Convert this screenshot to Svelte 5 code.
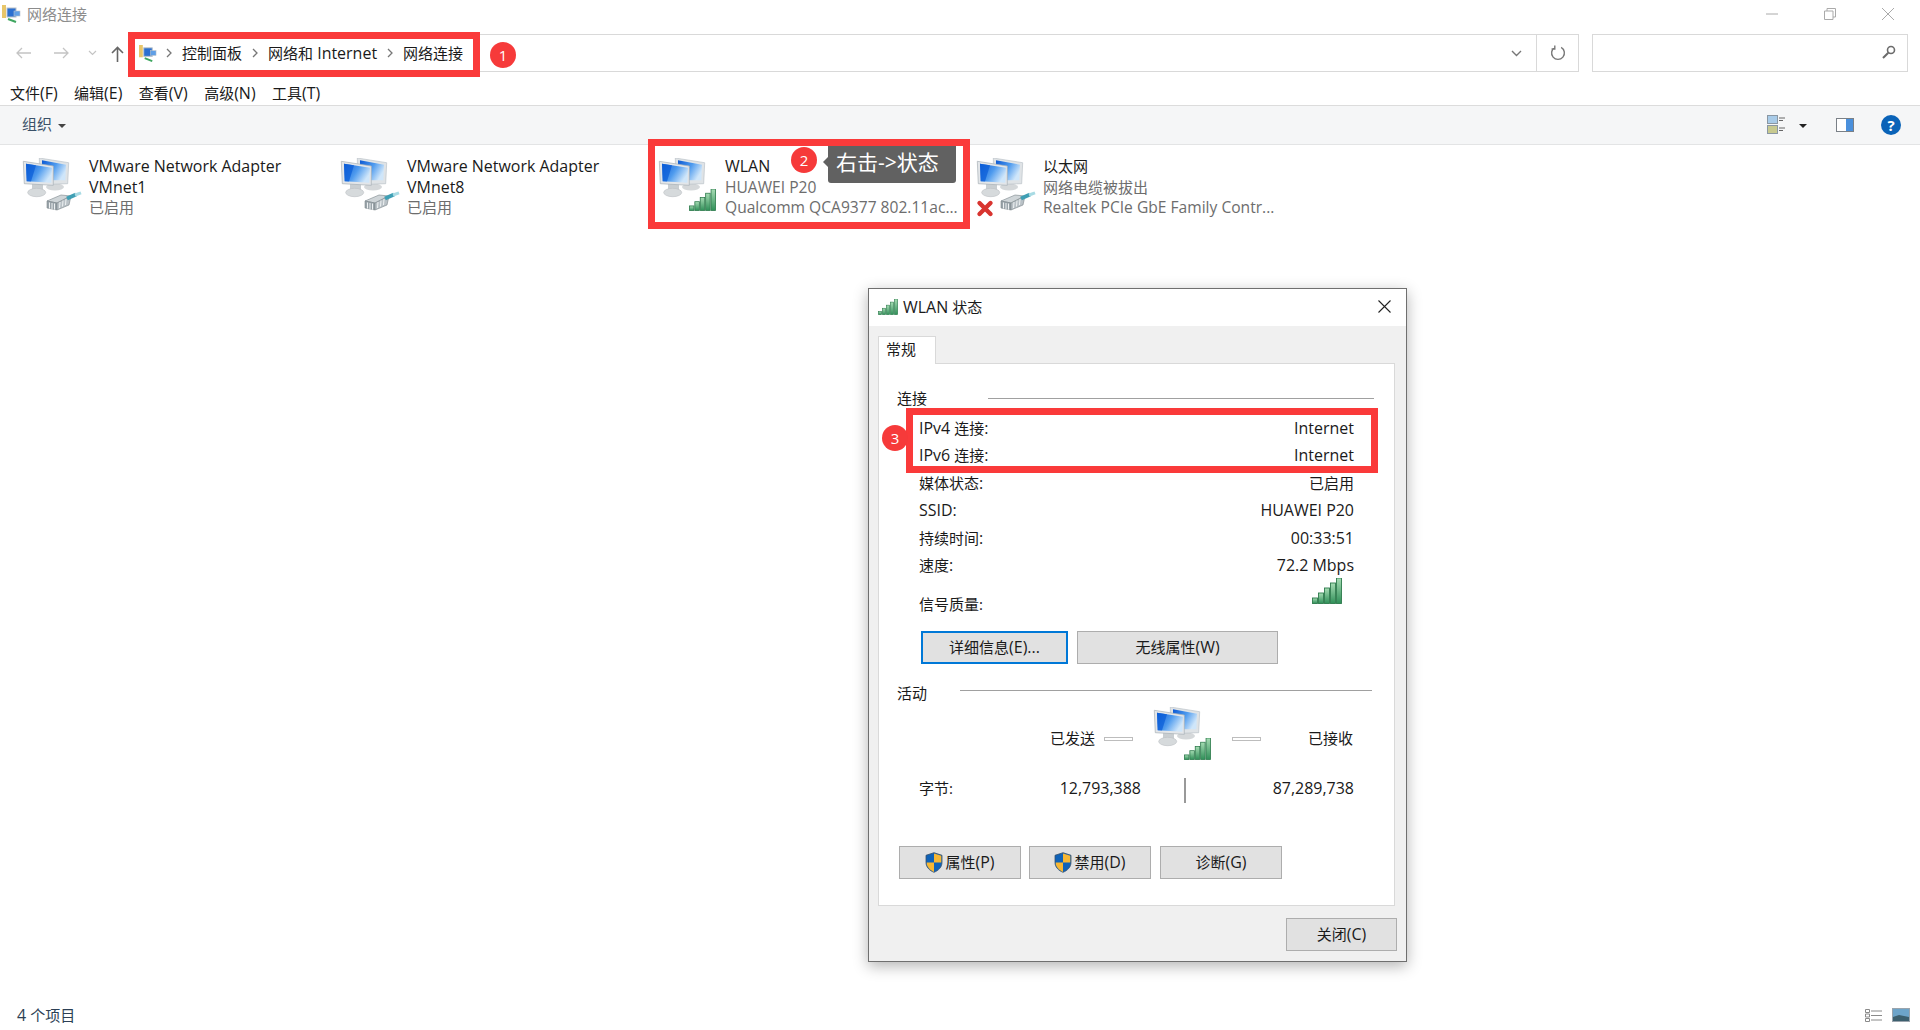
<script>
  const adapters = [
    { name: 'VMware Network Adapter', second: 'VMnet1', sub: ['已启用'], kind: 'plug' },
    { name: 'VMware Network Adapter', second: 'VMnet8', sub: ['已启用'], kind: 'plug' },
    { name: 'WLAN', second: '', sub: ['HUAWEI P20', 'Qualcomm QCA9377 802.11ac...'], kind: 'signal' },
    { name: '以太网', second: '', sub: ['网络电缆被拔出', 'Realtek PCIe GbE Family Contr...'], kind: 'off' }
  ];
  const rows = [
    ['IPv4 连接:', 'Internet'],
    ['IPv6 连接:', 'Internet'],
    ['媒体状态:', '已启用'],
    ['SSID:', 'HUAWEI P20'],
    ['持续时间:', '00:33:51'],
    ['速度:', '72.2 Mbps']
  ];
  const menus = ['文件(F)', '编辑(E)', '查看(V)', '高级(N)', '工具(T)'];
  const bars = [0, 1, 2, 3, 4];
  const runs = (s) => s.match(/[\x00-\x7f]+|[^\x00-\x7f]+/g);
  const isLatin = (s) => /^[\x00-\x7f]/.test(s);
</script>

{#snippet mix(text)}{#each runs(text) as r}{#if isLatin(r)}<span class="lat">{r}</span>{:else}{r}{/if}{/each}{/snippet}

{#snippet chev()}
  <svg class="chev" width="8" height="12" viewBox="0 0 8 12"><path d="M2 2l4 4-4 4" fill="none" stroke="#777" stroke-width="1.3"/></svg>
{/snippet}

{#snippet signal(w, h)}
  <svg width={w} height={h} viewBox="0 0 30 26" preserveAspectRatio="none">
    {#each bars as b}
      <rect x={0.5 + b * 6} y={20 - b * 5} width="5" height={5.5 + b * 5} fill="url(#sig)" stroke="#2d7a4c" stroke-width="0.9"/>
    {/each}
  </svg>
{/snippet}

{#snippet computer()}
  <ellipse cx="35" cy="29" rx="9" ry="3.500" fill="#d5d8da"/>
  <path d="M19.300 0l29.400 4.700-1 21-14 .500-14-2z" fill="#dfe3e6" stroke="#b4bcc2" stroke-width=".6"/>
  <path d="M22 2.300l24 4.400-.7 15.600H34L22 21z" fill="url(#scr)"/>
  <path d="M12 26h11v7H12z" fill="#c9ced1"/>
  <ellipse cx="16.700" cy="34.500" rx="9" ry="4.200" fill="#d6dadc" stroke="#bcc0c2" stroke-width=".6"/>
  <path d="M3.300 3.300l30 4.700v19.300l-29-1.600z" fill="#e3e6e9" stroke="#a8b0b6" stroke-width=".7"/>
  <path d="M6 5.700l26 4-.7 15-24.600-1.400z" fill="url(#scr)"/>
  <path d="M6 5.700l10 1.500-5 16.300-4.300-.2z" fill="#0c5fd8" opacity=".75"/>
{/snippet}

{#snippet plug()}
  <g transform="translate(1 0)">
    <path d="M26 43l14-6 10 1-14 7z" fill="#cfd5d8" stroke="#7c868c" stroke-width=".6"/>
    <path d="M26 43l10 2v7l-10-2z" fill="#9aa4aa" stroke="#7c868c" stroke-width=".6"/>
    <path d="M36 45l14-7-2 9-12 5z" fill="#b9c1c6" stroke="#7c868c" stroke-width=".6"/>
    <path d="M28.500 44.500v6M31 45v6.200M33.500 45.500v6.200M39 44l-.5 6M42 42.500l-.5 6M45 41l-.5 6" stroke="#eef1f2" stroke-width="1"/>
    <path d="M46 40.500l9-4" stroke="#3f9fb4" stroke-width="4" fill="none"/>
    <path d="M54 37l6-2.200" stroke="#a8dbe4" stroke-width="3" fill="none"/>
  </g>
{/snippet}

{#snippet netIcon(kind)}
  <span class="net">
    <svg width="62" height="62" viewBox="0 0 62 62">
      {@render computer()}
      {#if kind !== 'signal'}{@render plug()}{/if}
      {#if kind === 'off'}
        <path d="M5.500 45l11 11M16.500 45l-11 11" stroke="#d8342f" stroke-width="4.400" stroke-linecap="round" fill="none"/>
      {/if}
    </svg>
    {#if kind === 'signal'}<span class="net-sig">{@render signal(27, 22)}</span>{/if}
  </span>
{/snippet}

{#snippet shield()}
  <svg class="shield" width="18" height="21" viewBox="0 0 18 21">
    <path d="M9 .7l8 2.600v7c0 5-3.600 8.200-8 10-4.400-1.800-8-5-8-10v-7z" fill="#0f62b8" stroke="#39506a" stroke-width=".8"/>
    <path d="M9 1.500l7.300 2.300V10.500H9zM9 10.500v9.400c-3.800-1.700-7.300-4.700-7.300-9.400z" fill="#f7b733"/>
  </svg>
{/snippet}

{#snippet folderNet(w, h)}
  <svg width={w} height={h} viewBox="0 0 19 18">
    <rect x="0" y="0" width="4" height="13" fill="#e8c66a"/>
    <rect x="5" y="3" width="9" height="9" fill="#2b6fd0" stroke="#b8c0c8"/>
    <rect x="12" y="6" width="6" height="5" fill="#5f9fe6" stroke="#b8c0c8" stroke-width=".6"/>
    <path d="M6 14l8 3" stroke="#3fa660" stroke-width="2"/>
  </svg>
{/snippet}

<svg class="defs" width="0" height="0" aria-hidden="true">
  <defs>
    <linearGradient id="sig" x1="0" x2="0" y1="0" y2="1"><stop offset="0" stop-color="#a7dcb4"/><stop offset="1" stop-color="#2f8f58"/></linearGradient>
    <linearGradient id="scr" x1="0" x2="1" y1="0" y2=".5"><stop offset="0" stop-color="#0a58d4"/><stop offset=".55" stop-color="#4f9bee"/><stop offset="1" stop-color="#cfe6fa"/></linearGradient>
  </defs>
</svg>

<div class="page">
  <header class="titlebar">
    {@render folderNet(19, 18)}
    <span class="title-text">网络连接</span>
    <div class="winbtns">
      <svg width="12" height="12" viewBox="0 0 12 12"><path d="M0 6h12" stroke="#aaa"/></svg>
      <svg width="12" height="12" viewBox="0 0 12 12" fill="none" stroke="#aaa"><path d="M.5 3h8.500v8.500H.5zM3 3V.5h8.500V9H9"/></svg>
      <svg width="12" height="12" viewBox="0 0 12 12"><path d="M0 0l12 12M12 0L0 12" stroke="#aaa"/></svg>
    </div>
  </header>

  <div class="addr-row">
    <div class="nav">
      <svg width="15" height="12" viewBox="0 0 15 12" fill="none" stroke="#c4c4c4" stroke-width="1.300"><path d="M15 6H1M6 1L1 6l5 5"/></svg>
      <svg class="n2" width="16" height="12" viewBox="0 0 16 12" fill="none" stroke="#c4c4c4" stroke-width="1.300"><path d="M0 6h14M9 1l5 5-5 5"/></svg>
      <svg class="n3" width="9" height="6" viewBox="0 0 9 6" fill="none" stroke="#c4c4c4" stroke-width="1.200"><path d="M1 1l3.500 3.500L8 1"/></svg>
      <svg class="n4" width="13" height="16" viewBox="0 0 13 16" fill="none" stroke="#666" stroke-width="1.600"><path d="M6.500 16V1.500M1 7l5.500-5.500L12 7"/></svg>
    </div>
    <div class="addr">
      <span class="crumb-ico">{@render folderNet(18, 17)}</span>
      {@render chev()}<span class="crumb">控制面板</span>
      {@render chev()}<span class="crumb">{@render mix('网络和 Internet')}</span>
      {@render chev()}<span class="crumb">网络连接</span>
      <svg class="addr-down" width="11" height="7" viewBox="0 0 11 7" fill="none" stroke="#777" stroke-width="1.400"><path d="M1 1l4.500 4.500L10 1"/></svg>
      <span class="refresh">
        <svg width="16" height="16" viewBox="0 0 15 15" fill="none" stroke="#777" stroke-width="1.300"><path d="M4.500 2.300a6 6 0 1 0 6 0M4.500 .5v3.200H1.500"/></svg>
      </span>
    </div>
    <div class="search">
      <svg width="14" height="14" viewBox="0 0 14 14" fill="none" stroke="#6b6b6b" stroke-width="1.600"><circle cx="9" cy="5" r="3.500"/><path d="M6.300 7.700L1 13" stroke-width="2"/></svg>
    </div>
  </div>

  <nav class="menu">
    {#each menus as m}<span>{@render mix(m)}</span>{/each}
  </nav>

  <div class="toolbar">
    <span class="org">组织</span><span class="caret"></span>
    <div class="tool-right">
      <svg width="18" height="20" viewBox="0 0 18 20">
        <rect x=".5" y=".5" width="10" height="8" fill="#a8cbe8" stroke="#8a97a3"/>
        <rect x=".5" y="10.500" width="10" height="8" fill="#c7c98f" stroke="#8a97a3"/>
        <path d="M12 3h6M12 5.500h4M12 13h6M12 15.500h4" stroke="#666"/>
      </svg>
      <span class="caret dark"></span>
      <svg class="pane" width="18" height="14" viewBox="0 0 18 14">
        <rect x=".5" y=".5" width="17" height="13" fill="#fff" stroke="#7a8087"/>
        <rect x="10" y="1" width="7" height="12" fill="#4a90dc"/>
      </svg>
      <span class="help">?</span>
    </div>
  </div>

  <main class="items">
    {#each adapters as a}
      <div class="item">
        {@render netIcon(a.kind)}
        <div class="item-text">
          <div class="name">{@render mix(a.name)}</div>
          {#if a.second}<div class="name">{@render mix(a.second)}</div>{/if}
          {#each a.sub as s}<div class="sub">{@render mix(s)}</div>{/each}
        </div>
      </div>
    {/each}
  </main>

  <footer class="status">
    <span>{@render mix('4 个项目')}</span>
    <div class="status-right">
      <svg width="18" height="15" viewBox="0 0 18 15" fill="none" stroke="#8a8a8a">
        <path d="M.5 1.500h4v3h-4zM.5 6h4v3h-4zM.5 10.500h4v3h-4zM6 3h11M6 7.500h11M6 12h11"/>
      </svg>
      <svg width="18" height="14" viewBox="0 0 18 14"><rect x=".5" y=".5" width="17" height="13" fill="#6da4c9" stroke="#9aa4ad"/><path d="M1 9l6-2 10 2v4H1z" fill="#3c5f6e"/></svg>
    </div>
  </footer>

  <!-- annotations over the explorer -->
  <div class="mark m1"></div>
  <span class="dot d1">1</span>
  <div class="tip">右击-&gt;状态</div>
  <div class="mark m2"></div>
  <span class="dot d2">2</span>

  <section class="dialog">
    <div class="dlg-title">
      <span class="dlg-sig">{@render signal(20, 16)}</span>
      <span>{@render mix('WLAN 状态')}</span>
      <svg class="dlg-x" width="13" height="13" viewBox="0 0 13 13"><path d="M.5.500l12 12M12.500.500l-12 12" stroke="#222" stroke-width="1.100"/></svg>
    </div>
    <div class="tab">常规</div>
    <div class="panel">
      <div class="head h1"><span>连接</span><i></i></div>
      <div class="rows">
        {#each rows as r}
          <div class="row"><span>{@render mix(r[0])}</span><span>{@render mix(r[1])}</span></div>
        {/each}
        <div class="row sigrow"><span>信号质量:</span><span class="sigval">{@render signal(30, 26)}</span></div>
      </div>
      <div class="btns b1">
        <button class="focus">{@render mix('详细信息(E)...')}</button>
        <button class="wide">{@render mix('无线属性(W)')}</button>
      </div>
      <div class="head h2"><span>活动</span><i></i></div>
      <div class="activity">
        <span>已发送</span>
        <i class="dash"></i>
        <span class="act-icon">{@render netIcon('signal')}</span>
        <i class="dash d-r"></i>
        <span class="recv">已接收</span>
      </div>
      <div class="bytes">
        <span class="b-label">字节:</span>
        <span class="b-sent lat">12,793,388</span>
        <i></i>
        <span class="b-recv lat">87,289,738</span>
      </div>
      <div class="btns b2">
        <button>{@render shield()}{@render mix('属性(P)')}</button>
        <button>{@render shield()}{@render mix('禁用(D)')}</button>
        <button>{@render mix('诊断(G)')}</button>
      </div>
    </div>
    <div class="dlg-foot"><button class="close">{@render mix('关闭(C)')}</button></div>
    <div class="mark m3"></div>
    <span class="dot d3">3</span>
  </section>
</div>

<style>
  :global(body) { margin: 0; background: #fff; }
  .defs { position: absolute; }
  .lat { font-size: 1.065em; }
  .sub .lat { font-size: 1.04em; }
  .page {
    position: relative;
    display: flex;
    flex-direction: column;
    height: 1030px;
    overflow: hidden;
    font: 15px/20px "Open Sans", "Noto Sans CJK SC", sans-serif;
    color: #1a1a1a;
  }
  .titlebar { height: 34px; display: flex; align-items: flex-start; padding: 5px 0 0 2px; box-sizing: border-box; }
  .title-text { margin-left: 6px; color: #8c8c8c; line-height: 19px; }
  .winbtns { margin-left: auto; margin-right: 26px; margin-top: 3px; display: flex; gap: 46px; }
  .addr-row { height: 38px; display: flex; padding-right: 12px; }
  .nav { width: 132px; display: flex; align-items: center; padding-left: 16px; box-sizing: border-box; }
  .n2 { margin-left: 23px; }
  .n3 { margin-left: 18px; }
  .n4 { margin-left: 14px; margin-top: 2px; }
  .addr {
    flex: 1;
    display: flex;
    align-items: center;
    border: 1px solid #d9d9d9;
    padding-left: 6px;
    color: #1a1a1a;
  }
  .crumb-ico { margin-right: 8px; line-height: 0; }
  .chev { margin-right: 9px; }
  .crumb { margin-right: 9px; }
  .addr-down { margin-left: auto; margin-right: 14px; }
  .refresh { width: 41px; height: 100%; border-left: 1px solid #d9d9d9; display: flex; align-items: center; justify-content: center; }
  .search {
    width: 316px;
    margin-left: 13px;
    box-sizing: border-box;
    border: 1px solid #d9d9d9;
    display: flex;
    align-items: center;
    justify-content: flex-end;
    padding: 0 11px 3px 0;
  }
  .menu {
    height: 34px;
    box-sizing: border-box;
    display: flex;
    gap: 16.4px;
    padding: 11px 0 0 10px;
    border-bottom: 1px solid #dcdcdc;
    line-height: 20px;
  }
  .toolbar {
    height: 39px;
    box-sizing: border-box;
    background: #f5f6f7;
    border-bottom: 1px solid #e3e4e5;
    display: flex;
    align-items: center;
    padding-left: 22px;
    color: #3a5068;
  }
  .org { margin-top: -2px; }
  .caret { width: 0; height: 0; border: 4px solid transparent; border-top-color: #444; border-bottom: 0; margin-left: 6px; margin-top: 1px; }
  .tool-right { margin-left: auto; margin-right: 19px; display: flex; align-items: center; }
  .caret.dark { margin-left: 14px; border-top-color: #222; }
  .pane { margin-left: 29px; }
  .help {
    width: 20px;
    height: 20px;
    margin-left: 27px;
    border-radius: 50%;
    background: #0a63b8;
    color: #fff;
    font-weight: 700;
    font-size: 15px;
    line-height: 20px;
    text-align: center;
  }
  .items {
    flex: 1;
    display: grid;
    grid-template-columns: repeat(4, 318px);
    grid-auto-rows: min-content;
    padding: 11px 0 0 20px;
  }
  .item { display: flex; gap: 7px; }
  .net { position: relative; display: block; width: 62px; height: 62px; flex: none; margin-top: 2px; }
  .net-sig { position: absolute; right: 2px; bottom: 9px; line-height: 0; }
  .name { line-height: 20.7px; color: #1a1a1a; }
  .sub { line-height: 20.7px; color: #6d6d6d; }
  .status { height: 29px; display: flex; align-items: center; padding: 0 10px 2px 17px; box-sizing: border-box; color: #2c3f55; }
  .status-right { margin-left: auto; display: flex; gap: 9px; margin-top: 2px; }

  .mark { position: absolute; box-sizing: border-box; border: 7px solid #fa3a3a; }
  .m1 { left: 128px; top: 32px; width: 352px; height: 45px; }
  .m2 { left: 648px; top: 139px; width: 322px; height: 90px; }
  .m3 { left: 37px; top: 119px; width: 472px; height: 65px; }
  .dot {
    position: absolute;
    width: 26px;
    height: 26px;
    border-radius: 50%;
    background: #f63a3a;
    color: #fff;
    text-align: center;
    line-height: 26px;
    font-size: 15px;
  }
  .d1 { left: 490px; top: 42px; }
  .d2 { left: 791px; top: 147px; }
  .d3 { left: 13px; top: 136px; }
  .tip {
    position: absolute;
    left: 828px;
    top: 146px;
    width: 128px;
    height: 37px;
    box-sizing: border-box;
    padding-left: 8px;
    background: #616161;
    border-radius: 0 0 3px 3px;
    color: #fff;
    font-size: 21px;
    line-height: 32px;
  }
  .tip::before {
    content: "";
    position: absolute;
    left: -5px;
    top: 11px;
    border: 5px solid transparent;
    border-left: 0;
    border-right-color: #616161;
  }

  .dialog {
    position: absolute;
    left: 868px;
    top: 288px;
    width: 539px;
    height: 674px;
    box-sizing: border-box;
    border: 1px solid #6f6f6f;
    background: #f0f0f0;
    box-shadow: 0 4px 14px rgba(0, 0, 0, .3);
    color: #1a1a1a;
  }
  .dlg-title {
    height: 37px;
    background: #fff;
    display: flex;
    align-items: center;
    padding: 0 0 2px 9px;
    box-sizing: border-box;
    gap: 5px;
  }
  .dlg-sig { line-height: 0; }
  .dlg-x { margin-left: auto; margin-right: 15px; }
  .tab {
    width: 58px;
    height: 28px;
    box-sizing: border-box;
    margin: 10px 0 -1px 9px;
    padding: 2px 0 0 7px;
    background: #fff;
    border: 1px solid #d9d9d9;
    border-bottom: 0;
    position: relative;
    z-index: 1;
  }
  .panel {
    width: 517px;
    height: 543px;
    box-sizing: border-box;
    margin-left: 9px;
    background: #fff;
    border: 1px solid #d9d9d9;
  }
  .head { display: flex; padding: 0 20px 0 18px; height: 20px; }
  .head span { flex: none; width: 30px; }
  .head i { flex: 1; height: 1px; background: #a0a0a0; }
  .h1 { margin-top: 24px; }
  .h1 i { margin: 10px 0 0 61px; }
  .h2 { margin-top: 20px; padding-right: 22px; }
  .h2 span { margin-top: -1px; }
  .h2 i { margin: 6px 0 0 33px; }
  .rows { padding: 6px 40px 0 40px; }
  .row { height: 27.5px; display: flex; justify-content: space-between; align-items: center; }
  .sigrow { height: 35px; margin-top: 0; align-items: flex-start; }
  .sigrow > span:first-child { margin-top: 15px; }
  .sigval { line-height: 0; margin-right: 12px; margin-top: -1px; }
  button {
    font: inherit;
    color: #1a1a1a;
    height: 33px;
    width: 122px;
    padding: 0 0 1px;
    background: #e1e1e1;
    border: 1px solid #adadad;
    display: inline-flex;
    align-items: center;
    justify-content: center;
  }
  .btns { display: flex; }
  .b1 { margin-top: 17px; padding-left: 42px; gap: 9px; }
  .focus { width: 147px; border: 2px solid #0078d7; }
  .wide { width: 201px; }
  .activity { height: 54px; margin-top: 6px; display: flex; align-items: center; padding: 2px 41px 0 171px; box-sizing: border-box; }
  .dash { width: 29px; box-sizing: border-box; height: 4px; border: 1px solid #bdbdbd; margin: 2px 0 0 9px; }
  .act-icon { margin-left: 18px; width: 60px; height: 54px; }
  .act-icon .net { margin-top: -4px; }
  .d-r { margin-left: 21px; }
  .recv { margin-left: auto; }
  .bytes { margin-top: 14px; height: 25px; display: flex; padding: 0 40px; }
  .b-label { width: 60px; }
  .b-sent { width: 162px; text-align: right; }
  .bytes i { width: 2px; height: 25px; margin-left: 43px; background: #999; }
  .b-recv { flex: 1; text-align: right; }
  .b2 { margin-top: 43px; padding-left: 20px; gap: 8px; }
  .b2 button:nth-child(3) { margin-left: 1px; }
  .shield { margin-right: 2px; }
  .dlg-foot { display: flex; justify-content: flex-end; padding: 12px 9px 0 0; }
  .close { width: 111px; }
</style>
